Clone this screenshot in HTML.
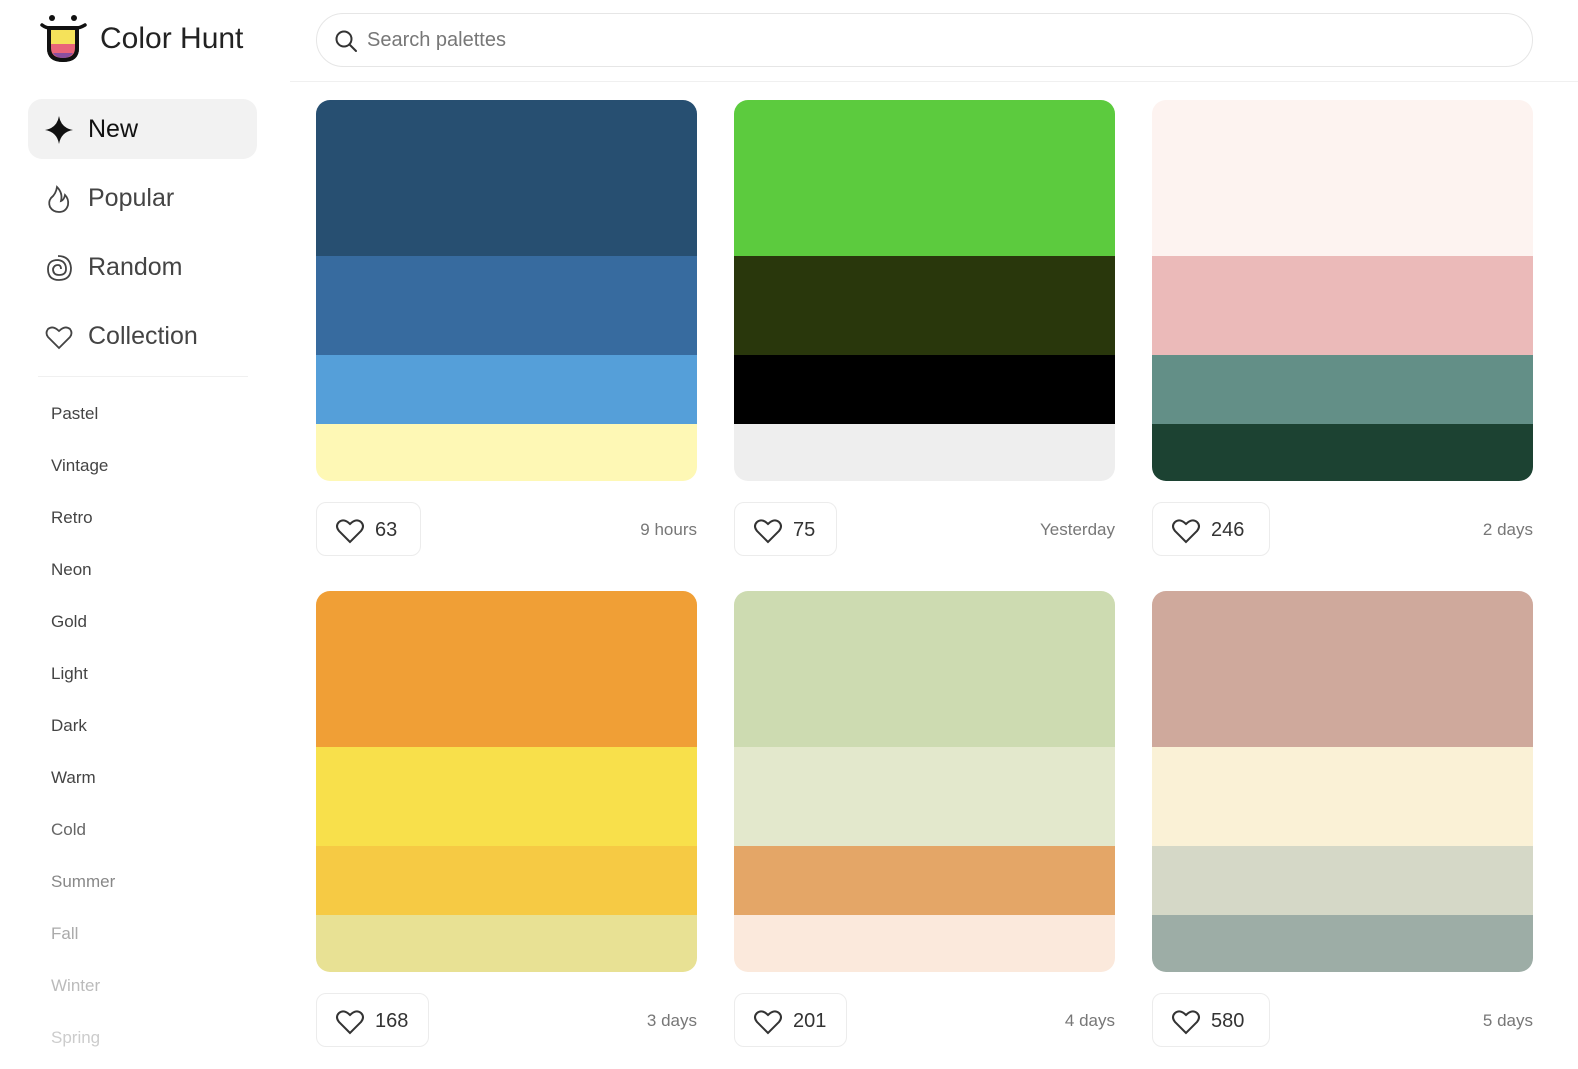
<!DOCTYPE html>
<html><head><meta charset="utf-8"><style>
*{margin:0;padding:0;box-sizing:border-box}
body{width:1578px;height:1069px;overflow:hidden;background:#fff;font-family:"Liberation Sans",sans-serif;position:relative;color:#222}
.abs{position:absolute}
.logo{left:40px;top:14px}
.brand{left:100px;top:22px;font-size:30px;color:#222}
.search{left:316px;top:13px;width:1217px;height:54px;border:1px solid #e6e6e6;border-radius:27px}
.search span{position:absolute;left:50px;top:15px;font-size:20px;color:#777}
.hline{left:290px;top:81px;width:1288px;height:1px;background:#f0f0f0}
.nav{left:28px;width:229px;height:60px;border-radius:14px;font-size:25px;color:#444}
.nav span{position:absolute;left:60px;top:16px}
.nav svg{position:absolute;left:16px;top:16px}
.sep{left:38px;top:376px;width:210px;height:1px;background:#f0f0f0}
.cat{left:51px;font-size:17px;color:#444}
.card{width:381px;height:381px;border-radius:14px;overflow:hidden}
.card div{width:100%}
.like{width:105px;height:54px;border:1px solid #ececec;border-radius:10px;font-size:20px;color:#333}
.like svg{position:absolute;left:18px;top:15px}
.like span{position:absolute;left:58px;top:16px}
.time{font-size:17px;color:#777;text-align:right;width:200px}
</style></head><body>
<svg class="abs logo" width="48" height="50" viewBox="0 0 48 50">
<circle cx="12" cy="4" r="3" fill="#111"/><circle cx="34" cy="4" r="3" fill="#111"/>
<path d="M2 11 Q6 14 10 14 L36 14 Q40 14 45 11" stroke="#111" stroke-width="3.5" fill="none" stroke-linecap="round"/>
<path d="M9 14 L9 34 Q9 46 23 46 Q37 46 37 34 L37 14Z" fill="#f5e25a" stroke="#111" stroke-width="4"/>
<path d="M11 30 L35 30 L35 34 Q35 44 23 44 Q11 44 11 34Z" fill="#e9647a"/>
<path d="M13 39 L33 39 Q30 44 23 44 Q16 44 13 39Z" fill="#8a4fa0"/>
<path d="M9 14 L9 34 Q9 46 23 46 Q37 46 37 34 L37 14" fill="none" stroke="#111" stroke-width="4"/>
</svg>
<div class="abs brand">Color Hunt</div>
<div class="abs search"><svg style="position:absolute;left:17px;top:15px" width="24" height="24" viewBox="0 0 24 24" fill="none" stroke="#333" stroke-width="2"><circle cx="10" cy="10" r="7.5"/><path d="M15.5 15.5 L22 22" stroke-linecap="round"/></svg><span>Search palettes</span></div>
<div class="abs hline"></div>

<div class="abs nav" style="top:99px;background:#f2f2f2;color:#111"><svg width="30" height="30" viewBox="0 0 30 30"><path d="M15 1 Q17 13 29 15 Q17 17 15 29 Q13 17 1 15 Q13 13 15 1Z" fill="#111"/></svg><span>New</span></div>
<div class="abs nav" style="top:168px"><svg width="30" height="30" viewBox="0 0 30 30" fill="none" stroke="#444" stroke-width="1.8"><path d="M13 3 Q12 10 7 14 Q4 18 6 23 Q9 28 15 28 Q22 28 24 21 Q25 15 21 11 Q20 16 17 17 Q19 9 13 3Z"/></svg><span>Popular</span></div>
<div class="abs nav" style="top:237px"><svg width="30" height="30" viewBox="0 0 30 30" fill="none" stroke="#444" stroke-width="1.8"><path d="M14 3 Q26 3 27 15 Q27 27 15 27 Q4 27 4 16 Q4 7 14 7 Q22 8 22 16 Q22 22 15 22 Q9 22 9 16 Q10 12 14 12 Q17 12 17 16"/></svg><span>Random</span></div>
<div class="abs nav" style="top:306px"><svg width="30" height="30" viewBox="0 0 30 30" fill="none" stroke="#444" stroke-width="1.8"><path d="M15 26 L4 15 Q1 11 4 7 Q9 3 15 9 Q21 3 26 7 Q29 11 26 15Z"/></svg><span>Collection</span></div>
<div class="abs sep"></div>
<div class="abs cat" style="top:404px">Pastel</div>
<div class="abs cat" style="top:456px">Vintage</div>
<div class="abs cat" style="top:508px">Retro</div>
<div class="abs cat" style="top:560px">Neon</div>
<div class="abs cat" style="top:612px">Gold</div>
<div class="abs cat" style="top:664px">Light</div>
<div class="abs cat" style="top:716px">Dark</div>
<div class="abs cat" style="top:768px">Warm</div>
<div class="abs cat" style="top:820px;color:#666">Cold</div>
<div class="abs cat" style="top:872px;color:#888">Summer</div>
<div class="abs cat" style="top:924px;color:#aaa">Fall</div>
<div class="abs cat" style="top:976px;color:#bbb">Winter</div>
<div class="abs cat" style="top:1028px;color:#ccc">Spring</div>

<div class="abs card" style="left:316px;top:100px"><div style="height:156px;background:#274f71"></div><div style="height:99px;background:#376b9f"></div><div style="height:69px;background:#559fd9"></div><div style="height:57px;background:#fef8b5"></div></div>
<div class="abs card" style="left:734px;top:100px"><div style="height:156px;background:#5ccb3e"></div><div style="height:99px;background:#29370c"></div><div style="height:69px;background:#000"></div><div style="height:57px;background:#eeeeee"></div></div>
<div class="abs card" style="left:1152px;top:100px"><div style="height:156px;background:#fdf3f0"></div><div style="height:99px;background:#ebbab9"></div><div style="height:69px;background:#638f87"></div><div style="height:57px;background:#1c4232"></div></div>
<div class="abs card" style="left:316px;top:591px"><div style="height:156px;background:#f09f36"></div><div style="height:99px;background:#f8e04b"></div><div style="height:69px;background:#f6ca44"></div><div style="height:57px;background:#e8e194"></div></div>
<div class="abs card" style="left:734px;top:591px"><div style="height:156px;background:#cddbb1"></div><div style="height:99px;background:#e3e8cc"></div><div style="height:69px;background:#e4a667"></div><div style="height:57px;background:#fbe9dc"></div></div>
<div class="abs card" style="left:1152px;top:591px"><div style="height:156px;background:#cfa99c"></div><div style="height:99px;background:#faf1d6"></div><div style="height:69px;background:#d5d8c7"></div><div style="height:57px;background:#9dada6"></div></div>

<div class="abs like" style="left:316px;top:502px"><svg width="30" height="26" viewBox="0 0 30 26" fill="none" stroke="#333" stroke-width="2"><path d="M15 24 L4 13 Q0 8 4 4 Q9 0 15 6 Q21 0 26 4 Q30 8 26 13Z"/></svg><span>63</span></div>
<div class="abs time" style="left:497px;top:520px">9 hours</div>
<div class="abs like" style="left:734px;top:502px;width:103px"><svg width="30" height="26" viewBox="0 0 30 26" fill="none" stroke="#333" stroke-width="2"><path d="M15 24 L4 13 Q0 8 4 4 Q9 0 15 6 Q21 0 26 4 Q30 8 26 13Z"/></svg><span>75</span></div>
<div class="abs time" style="left:915px;top:520px">Yesterday</div>
<div class="abs like" style="left:1152px;top:502px;width:118px"><svg width="30" height="26" viewBox="0 0 30 26" fill="none" stroke="#333" stroke-width="2"><path d="M15 24 L4 13 Q0 8 4 4 Q9 0 15 6 Q21 0 26 4 Q30 8 26 13Z"/></svg><span>246</span></div>
<div class="abs time" style="left:1333px;top:520px">2 days</div>

<div class="abs like" style="left:316px;top:993px;width:113px"><svg width="30" height="26" viewBox="0 0 30 26" fill="none" stroke="#333" stroke-width="2"><path d="M15 24 L4 13 Q0 8 4 4 Q9 0 15 6 Q21 0 26 4 Q30 8 26 13Z"/></svg><span>168</span></div>
<div class="abs time" style="left:497px;top:1011px">3 days</div>
<div class="abs like" style="left:734px;top:993px;width:113px"><svg width="30" height="26" viewBox="0 0 30 26" fill="none" stroke="#333" stroke-width="2"><path d="M15 24 L4 13 Q0 8 4 4 Q9 0 15 6 Q21 0 26 4 Q30 8 26 13Z"/></svg><span>201</span></div>
<div class="abs time" style="left:915px;top:1011px">4 days</div>
<div class="abs like" style="left:1152px;top:993px;width:118px"><svg width="30" height="26" viewBox="0 0 30 26" fill="none" stroke="#333" stroke-width="2"><path d="M15 24 L4 13 Q0 8 4 4 Q9 0 15 6 Q21 0 26 4 Q30 8 26 13Z"/></svg><span>580</span></div>
<div class="abs time" style="left:1333px;top:1011px">5 days</div>
</body></html>
